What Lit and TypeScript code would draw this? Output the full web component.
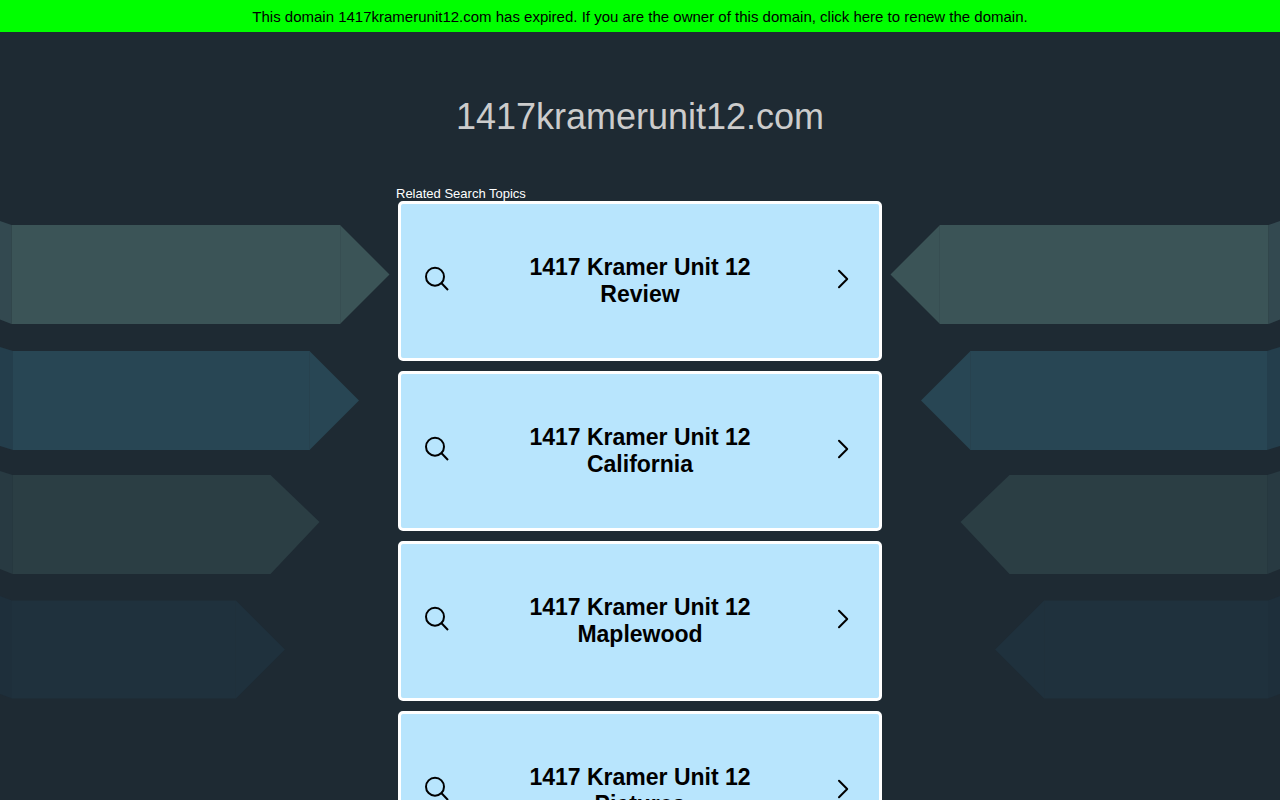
import { LitElement, html, css, svg } from "lit";
import { customElement, property } from "lit/decorators.js";

interface Ribbon {
  face: string;
  side: string;
  body: string;
  fold: string;
  seam: string;
}

const RIBBONS: Ribbon[] = [
  {
    face: "#3b5457",
    side: "#334950",
    body: "11.500,225 340,225 389.500,274.500 340,324 11.500,324",
    fold: "0,221 11.500,225 11.500,324 0,319.500",
    seam: "M340.500 226V323",
  },
  {
    face: "#284654",
    side: "#243e4c",
    body: "13,351 309.500,351 359,400.500 309.500,450 13,450",
    fold: "0,347 13,351 13,450 0,446",
    seam: "M309.500 352V449",
  },
  {
    face: "#2b3e44",
    side: "#283a42",
    body: "12.500,475 270.500,475 319.500,522 270.500,574 12.500,574",
    fold: "0,471 12.500,475 12.500,574 0,569",
    seam: "",
  },
  {
    face: "#1f313d",
    side: "#1e2f3b",
    body: "12,600.500 236,600.500 285,649.500 236,698.500 12,698.500",
    fold: "0,596 12,600.500 12,698.500 0,694",
    seam: "M235.500 601V698",
  },
];

@customElement("ribbon-art")
export class RibbonArt extends LitElement {
  @property({ type: Boolean }) mirrored = false;

  static styles = css`
    :host {
      display: flex;
      overflow: hidden;
    }
    :host([mirrored]) {
      justify-content: flex-end;
    }
    .art {
      display: block;
      flex: none;
    }
  `;

  render() {
    return html`
      <svg class="art" width="396" height="768" viewBox="0 32 396 768" aria-hidden="true">
        <g transform=${this.mirrored ? "translate(396 0) scale(-1 1)" : "translate(0 0)"}>
          ${RIBBONS.map(
            (r) => svg`
              <polygon points=${r.fold} fill=${r.side}></polygon>
              <polygon points=${r.body} fill=${r.face}></polygon>
              <path d=${r.seam} stroke="#1e2a33" stroke-opacity="0.12" fill="none"></path>`
          )}
        </g>
      </svg>
    `;
  }
}

@customElement("topic-card")
export class TopicCard extends LitElement {
  @property() label = "";

  static styles = css`
    :host {
      display: block;
    }
    .card {
      display: grid;
      grid-template-columns: 28px minmax(0, 280px) 28px;
      justify-content: space-between;
      align-items: center;
      box-sizing: border-box;
      min-height: 160px;
      padding: 0 20px;
      border: 3px solid #fff;
      border-radius: 5px;
      background: #b8e5fd;
      color: #000;
      text-decoration: none;
    }
    .text {
      font-size: 23px;
      line-height: 27px;
      font-weight: 700;
      text-align: center;
    }
    .icon {
      display: block;
      margin-bottom: 4px;
    }
  `;

  render() {
    return html`
      <a class="card" href="#">
        <svg class="icon" width="28" height="28" viewBox="0 0 28 28" fill="none" stroke="#000" stroke-width="2" aria-hidden="true">
          <circle cx="14" cy="11.700" r="9"></circle>
          <path d="M20.300 18L27 25"></path>
        </svg>
        <span class="text">${this.label}</span>
        <svg class="icon" width="28" height="28" viewBox="0 0 28 28" fill="none" stroke="#000" stroke-width="2" stroke-linecap="round" stroke-linejoin="round" aria-hidden="true">
          <path d="M8 5.700L16.200 14L8 22.200"></path>
        </svg>
      </a>
    `;
  }
}

@customElement("app-root")
export class AppRoot extends LitElement {
  private topics = [
    "1417 Kramer Unit 12 Review",
    "1417 Kramer Unit 12 California",
    "1417 Kramer Unit 12 Maplewood",
    "1417 Kramer Unit 12 Pictures",
  ];

  static styles = css`
    :host {
      display: block;
      height: 100vh;
      overflow-x: hidden;
      overflow-y: auto;
      scrollbar-width: none;
      background: #1e2a33;
      font-family: "Liberation Sans", Arial, sans-serif;
    }
    .banner {
      display: block;
      padding: 9px 8px 7px;
      background: #0f0;
      color: #000;
      font-size: 15px;
      line-height: 16px;
      text-align: center;
      text-decoration: none;
    }
    .layout {
      display: grid;
      grid-template-columns: minmax(0, 1fr) minmax(0, 488px) minmax(0, 1fr);
    }
    .title {
      margin: 64px 0 48px;
      color: #ccc;
      font-size: 36px;
      line-height: 42px;
      font-weight: 400;
      text-align: center;
    }
    .heading {
      margin: 0;
      color: #fff;
      font-size: 13px;
      line-height: 15px;
      font-weight: 400;
    }
    .topics {
      display: flex;
      flex-direction: column;
      gap: 10px;
      margin: 0;
      padding: 0 2px 10px;
      list-style: none;
    }
  `;

  render() {
    return html`
      <a class="banner" href="#">This domain 1417kramerunit12.com has expired. If you are the owner of this domain, click here to renew the domain.</a>
      <div class="layout">
        <ribbon-art></ribbon-art>
        <main>
          <h1 class="title">1417kramerunit12.com</h1>
          <h2 class="heading">Related Search Topics</h2>
          <ul class="topics">
            ${this.topics.map((t) => html`<li><topic-card .label=${t}></topic-card></li>`)}
          </ul>
        </main>
        <ribbon-art mirrored></ribbon-art>
      </div>
    `;
  }
}
